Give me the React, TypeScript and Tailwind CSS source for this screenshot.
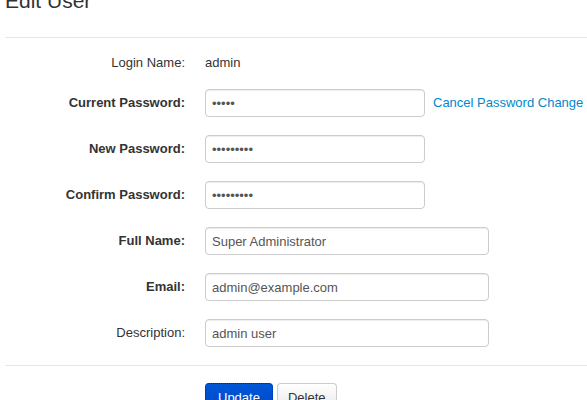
import React from "react";

const font = { fontFamily: '"Liberation Sans", Arial, Helvetica, sans-serif' };

function Row({
  label,
  bold = true,
  children,
}: {
  label: string;
  bold?: boolean;
  children: React.ReactNode;
}) {
  return (
    <div className="flex items-center h-[28px]">
      <div
        className={`w-[180px] shrink-0 text-right text-[13px] text-[#333] ${
          bold ? "font-bold" : ""
        }`}
      >
        {label}
      </div>
      <div className="ml-[20px] flex items-center">{children}</div>
    </div>
  );
}

function Field({
  value,
  type = "text",
  wide = false,
}: {
  value: string;
  type?: string;
  wide?: boolean;
}) {
  return (
    <input
      type={type}
      defaultValue={value}
      readOnly
      className={`h-[28px] ${
        wide ? "w-[284px]" : "w-[220px]"
      } rounded-[4px] border border-[#cccccc] bg-white px-[6px] text-[13px] text-[#555] shadow-[inset_0_1px_1px_rgba(0,0,0,0.075)] outline-none`}
      style={font}
    />
  );
}

export default function App() {
  return (
    <div
      className="w-[587px] h-[400px] overflow-hidden bg-white text-[13px] text-[#333]"
      style={font}
    >
      <div className="ml-[5px] w-[640px]">
        <div className="-mt-[19px] h-[57px] border-b border-[#e5e5e5] text-[21px] leading-[40px] text-[#333]">
          Edit User
        </div>

        <div className="mt-[15px] flex items-center h-[20px]">
          <div className="w-[180px] shrink-0 text-right">Login Name:</div>
          <div className="ml-[20px]">admin</div>
        </div>

        <div className="mt-[16px] flex flex-col gap-[18px]">
          <Row label="Current Password:">
            <Field type="password" value="12345" />
            <a className="ml-[8px] text-[#0088cc] cursor-pointer">Cancel Password Change</a>
          </Row>
          <Row label="New Password:">
            <Field type="password" value="123456789" />
          </Row>
          <Row label="Confirm Password:">
            <Field type="password" value="123456789" />
          </Row>
          <Row label="Full Name:">
            <Field value="Super Administrator" wide />
          </Row>
          <Row label="Email:">
            <Field value="admin@example.com" wide />
          </Row>
          <Row label="Description:" bold={false}>
            <Field value="admin user" wide />
          </Row>
        </div>

        <div className="mt-[18px] border-t border-[#e5e5e5]" />

        <div className="mt-[17px] flex gap-[4px] pl-[200px]">
          <button
            className="h-[30px] px-[12px] rounded-[4px] border border-dotted border-[#0b2a66] bg-gradient-to-b from-[#0058d6] to-[#0044cc] text-[13px] text-white"
            style={font}
          >
            Update
          </button>
          <button
            className="h-[30px] px-[10px] rounded-[4px] border border-[#cccccc] border-b-[#b3b3b3] bg-gradient-to-b from-white to-[#e6e6e6] text-[13px] text-[#333]"
            style={font}
          >
            Delete
          </button>
        </div>
      </div>
    </div>
  );
}
